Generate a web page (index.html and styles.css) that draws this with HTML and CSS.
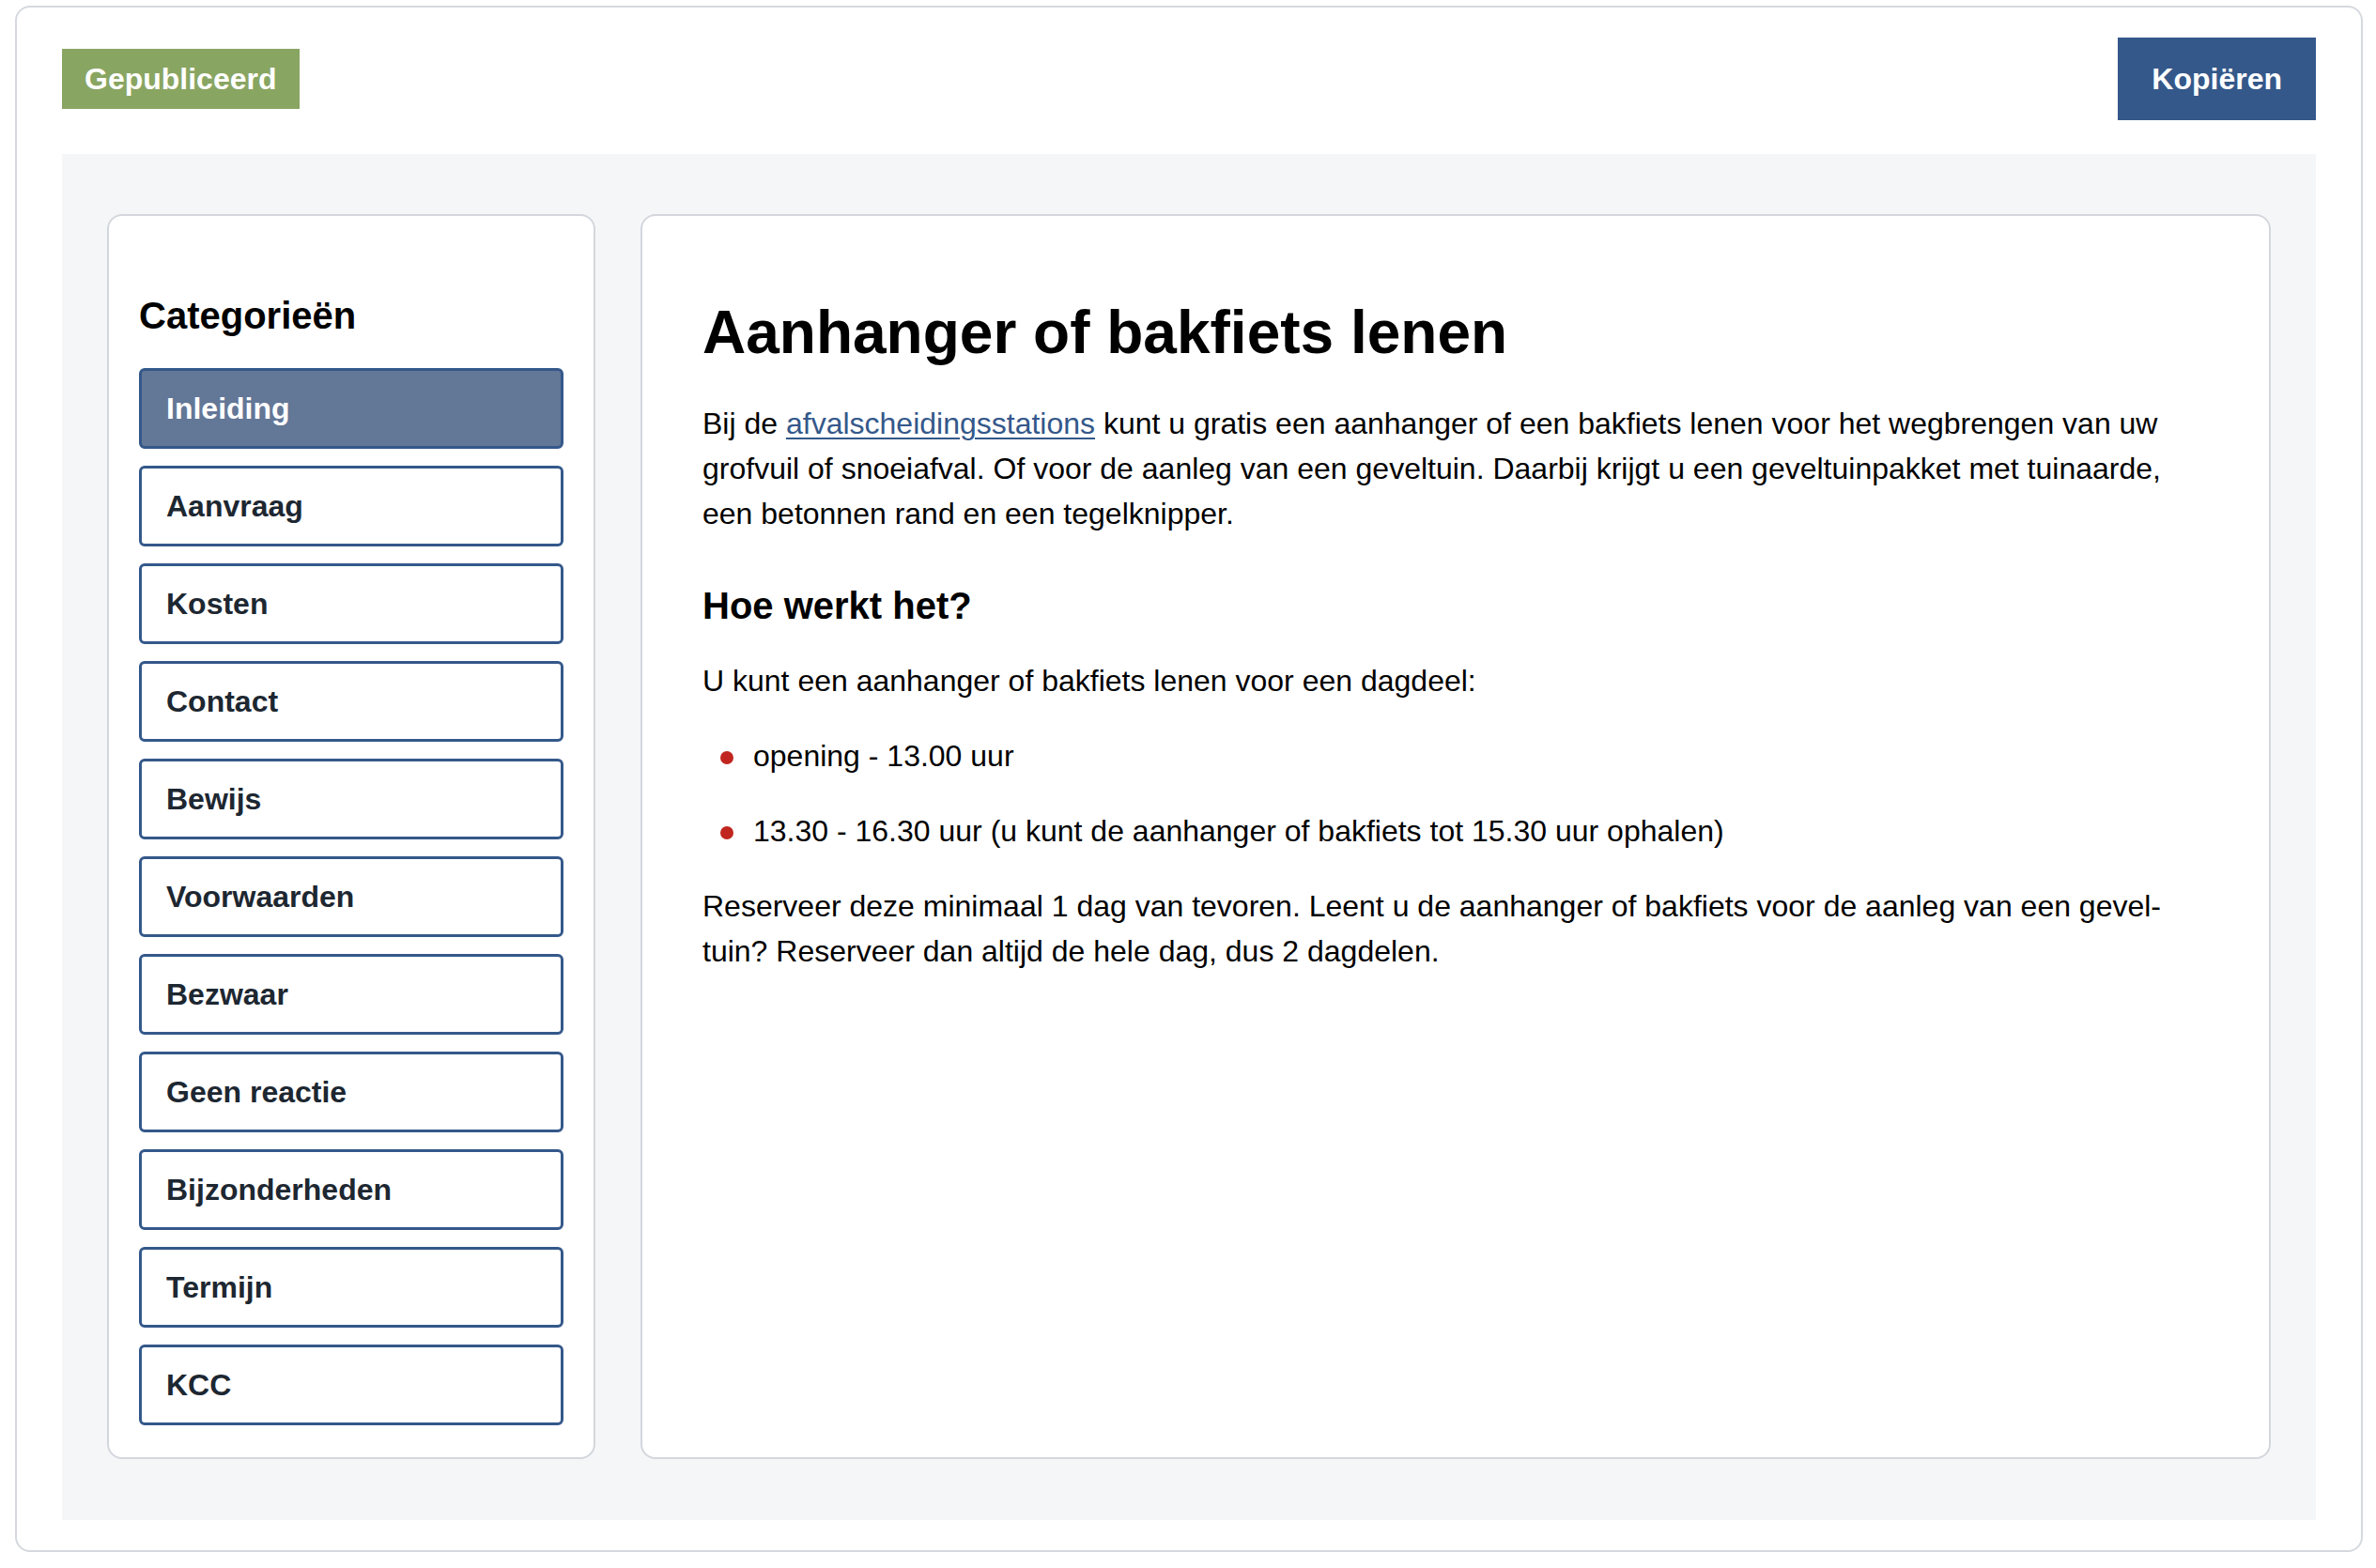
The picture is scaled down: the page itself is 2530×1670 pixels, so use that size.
FILE: index.html
```html
<!DOCTYPE html>
<html lang="nl">
<head>
    <meta charset="UTF-8">
    <meta name="viewport" content="width=device-width, initial-scale=1.0">
    <title>Aanhanger of bakfiets lenen</title>
    <link rel="stylesheet" href="styles.css">
</head>
<body>
    <div class="page">
        <div class="frame">
            <div class="toolbar">
                <span class="status">Gepubliceerd</span>
                <button class="copy-btn">Kopiëren</button>
            </div>

            <div class="workspace">
                <aside class="sidebar">
                    <h2 class="sidebar-title">Categorieën</h2>
                    <nav class="cat-list">
                        <a href="#" class="cat-item active">Inleiding</a>
                        <a href="#" class="cat-item">Aanvraag</a>
                        <a href="#" class="cat-item">Kosten</a>
                        <a href="#" class="cat-item">Contact</a>
                        <a href="#" class="cat-item">Bewijs</a>
                        <a href="#" class="cat-item">Voorwaarden</a>
                        <a href="#" class="cat-item">Bezwaar</a>
                        <a href="#" class="cat-item">Geen reactie</a>
                        <a href="#" class="cat-item">Bijzonderheden</a>
                        <a href="#" class="cat-item">Termijn</a>
                        <a href="#" class="cat-item">KCC</a>
                    </nav>
                </aside>

                <main class="content">
                    <h1>Aanhanger of bakfiets lenen</h1>
                    <p>Bij de <a href="#">afvalscheidingsstations</a> kunt u gratis een aanhanger of een bakfiets lenen voor het wegbrengen van uw grofvuil of snoeiafval. Of voor de aanleg van een geveltuin. Daarbij krijgt u een geveltuinpakket met tuinaarde, een betonnen rand en een tegelknipper.</p>
                    <h2>Hoe werkt het?</h2>
                    <p>U kunt een aanhanger of bakfiets lenen voor een dagdeel:</p>
                    <ul>
                        <li>opening - 13.00 uur</li>
                        <li>13.30 - 16.30 uur (u kunt de aanhanger of bakfiets tot 15.30 uur ophalen)</li>
                    </ul>
                    <p>Reserveer deze minimaal 1 dag van tevoren. Leent u de aanhanger of bakfiets voor de aanleg van een gevel&shy;tuin? Reserveer dan altijd de hele dag, dus 2 dagdelen.</p>
                </main>
            </div>
        </div>
    </div>
</body>
</html>
```

FILE: styles.css
```css
body {
    margin: 0;
    font-family: "Liberation Sans", Arial, Helvetica, sans-serif;
    color: #000;
    background: #fff;
}
.page {
    padding: 6px 14px 14px 16px;
}
.frame {
    border: 2px solid #d5d9df;
    border-radius: 16px;
    padding: 32px 48px;
}

/* top bar */
.toolbar {
    display: flex;
    justify-content: space-between;
    align-items: center;
    margin-bottom: 36px;
}
.status {
    background: #89a562;
    color: #fff;
    font-weight: bold;
    font-size: 32px;
    line-height: 48px;
    padding: 8px 24px;
}
.copy-btn {
    background: #34588a;
    color: #fff;
    border: none;
    font-family: inherit;
    font-weight: bold;
    font-size: 32px;
    line-height: 48px;
    padding: 20px 36px;
    cursor: pointer;
}

/* grey area with the two cards */
.workspace {
    background: #f5f6f8;
    padding: 64px 48px 65px;
    display: grid;
    grid-template-columns: 520px 1fr;
    gap: 48px;
}
.sidebar, .content {
    background: #fff;
    border: 2px solid #d3d7dd;
    border-radius: 16px;
}
.sidebar {
    padding: 32px 32px 34px;
}
.sidebar-title {
    font-size: 40px;
    line-height: 48px;
    margin: 50px 0 32px;
}
.cat-list {
    display: flex;
    flex-direction: column;
    gap: 18px;
}
.cat-item {
    display: block;
    border: 3px solid #34588a;
    border-radius: 6px;
    padding: 16px 26px;
    font-size: 32px;
    line-height: 48px;
    font-weight: bold;
    color: #1d2731;
    text-decoration: none;
}
.cat-item.active {
    background: #637797;
    color: #fff;
}

/* article */
.content {
    padding: 64px;
    font-size: 32px;
    line-height: 48px;
}
.content h1 {
    font-size: 64px;
    line-height: 76.8px;
    margin: 22px 0 34px;
}
.content h2 {
    font-size: 40px;
    line-height: 48px;
    margin: 50px 0 32px;
}
.content p {
    margin: 32px 0;
}
.content a {
    color: #34588a;
    text-decoration-thickness: 2px;
    text-underline-offset: 4px;
}
.content ul {
    list-style: none;
    margin: 32px 0;
    padding-left: 19px;
}
.content li {
    margin: 32px 0;
}
.content li::before {
    content: "";
    display: inline-block;
    width: 14px;
    height: 14px;
    border-radius: 50%;
    background: #c0261f;
    margin-right: 21px;
    vertical-align: 2px;
}
```
